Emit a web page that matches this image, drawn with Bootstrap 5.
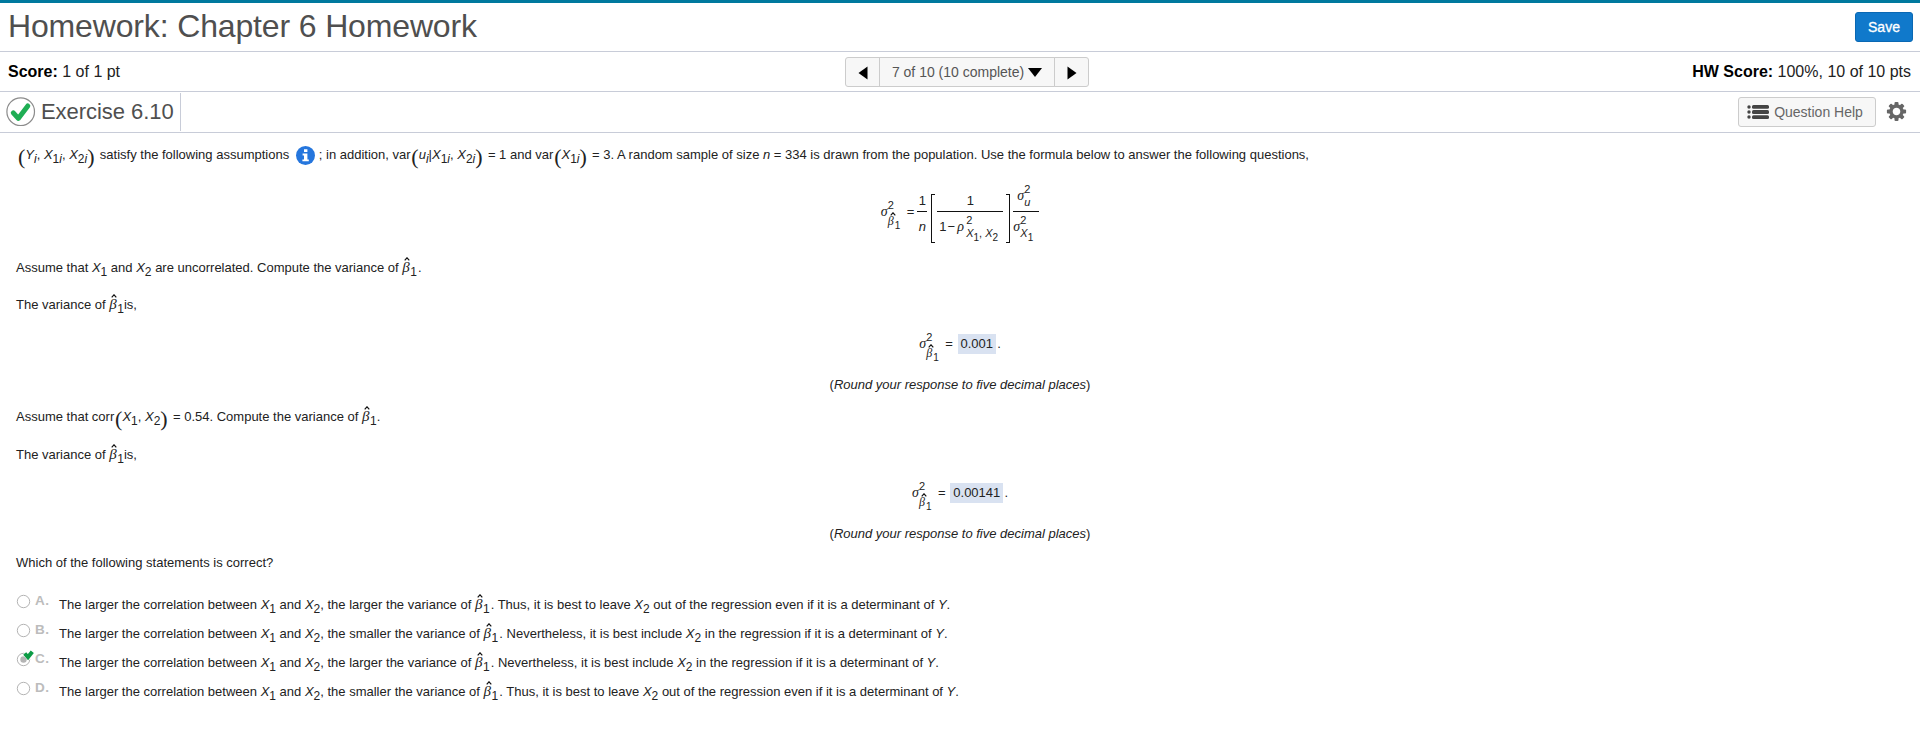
<!DOCTYPE html>
<html lang="en">
<head>
<meta charset="utf-8">
<title>Homework: Chapter 6 Homework</title>
<link href="https://cdn.jsdelivr.net/npm/bootstrap@5.3.0/dist/css/bootstrap.min.css" rel="stylesheet">
<style>
body{font-family:"Liberation Sans",Arial,sans-serif;color:#222;background:#fff;font-size:13px;line-height:20px;overflow:hidden}
.bar-title{height:52px;border-top:3px solid #00799e;border-bottom:1px solid #c8ccd8;padding:0 7px 0 8px}
.bar-title h1{font-size:32px;line-height:47px;color:#4f4f4f;font-weight:400;letter-spacing:-.15px}
.btn-save{width:58px;height:30px;padding:0;font-size:14px;line-height:28px;color:#fff;background:#1079cb;border:1px solid #0a68b3;border-radius:3px;-webkit-text-stroke:.3px #fff}
.bar-score{height:40px;border-bottom:1px solid #c8ccd8;padding:0 9px 0 8px;font-size:16px;color:#222}
.bar-score strong{color:#000}
.side{width:400px}
.pager .btn{height:30px;padding:0;font-size:14px;line-height:28px;color:#555;background:#f7f7f7;border:1px solid #ccc;border-radius:3px}
.pager .btn-arrow{width:35px}
.pager .btn-mid{width:176px}
.pager{margin-left:15px}
.bar-ex{height:41px;border-bottom:1px solid #c8ccd8;padding:0 11px 0 6px}
.ex-name{height:38px;width:175px;margin-top:1px;border-right:1px solid #c8ccd8;font-size:22px;color:#4f4f4f;gap:5px}
.ex-name span{line-height:30px;letter-spacing:-.05px}
.btn-help{width:138px;height:30px;padding:0 4px 0 0;font-size:14px;line-height:28px;color:#666;background:#f7f7f7;border:1px solid #ccc;border-radius:3px;gap:5px}
.work{padding:12px 0 0 16px}
.ln{height:20px;white-space:nowrap}
.mid-row{margin-left:-16px}
i.v{font-style:italic}
.lo{font-size:12px;line-height:0;vertical-align:-4px}
.pr{font-family:"Liberation Serif",serif;font-size:22px;line-height:0;vertical-align:-5px;margin-left:.8px}
.pr-r{margin:0 1.7px 0 0}
.pr-lead{margin-left:2px}
.info{vertical-align:-6px;margin:0 4px 0 3px}
.bh{position:relative;display:inline-block;width:8px;height:16px;font:italic 15px/16px "Liberation Serif",serif}
.bh svg{position:absolute;left:2px;top:-2px}
.grk{font-family:"Liberation Serif",serif;font-style:italic;font-size:14px;line-height:18px}
.stk{position:relative;display:inline-block;line-height:20px;text-align:left}
.stk .up,.stk .dn{position:absolute;left:7px;font-size:11px;white-space:nowrap}
.stk .up{top:-7px}
.stk .dn{top:6px}
.stk .dn .lo{font-size:10px}
.stk .dn.hat{top:9px}
.stk .hat .bh{font-size:12px;width:7px}
.stk .hat .bh svg{left:2px;top:-1px}
.rho .up,.rho .dn{left:9px}
.formula{height:93px}
.frac{display:grid;grid-template-rows:24px 24px;text-align:center}
.frac>:first-child{border-bottom:1px solid #111;padding-top:3px}
.frac>:last-child{padding-top:5px}
.brk{position:relative;top:7px;width:4px;height:49px;border:1px solid #111;border-width:1px 1.5px}
.brk-l{border-right:0;margin:0 2px 0 4px}
.brk-r{border-left:0;margin:0 3px 0 3px}
.ans{display:inline-block;background:#d9e2f1;padding:0 3px;height:20px}
.choice{height:29px}
.choice>svg{margin:-1px 4px 0 0;overflow:visible}
.choice b{width:24px;color:#bcbcbc;font-size:13.5px;letter-spacing:.4px;margin-top:-4px}
</style>
</head>
<body>
<header class="bar-title d-flex align-items-center justify-content-between">
  <h1 class="m-0 align-self-start">Homework: Chapter 6 Homework</h1>
  <button class="btn btn-save">Save</button>
</header>
<section class="bar-score d-flex align-items-center justify-content-between">
  <div class="side"><strong>Score:</strong> 1 of 1 pt</div>
  <div class="btn-group pager">
    <button class="btn btn-arrow" aria-label="Previous"><svg width="10" height="14" viewBox="0 0 10 14"><path d="M9.5 .5v13L.5 7z" fill="#000"/></svg></button>
    <button class="btn btn-mid">7 of 10 (10 complete) <svg width="14" height="9" viewBox="0 0 14 9"><path d="M0 0h14L7 9z" fill="#000"/></svg></button>
    <button class="btn btn-arrow" aria-label="Next"><svg width="10" height="14" viewBox="0 0 10 14"><path d="M.5 .5v13L9.5 7z" fill="#000"/></svg></button>
  </div>
  <div class="side text-end"><strong>HW Score:</strong> 100%, 10 of 10 pts</div>
</section>
<section class="bar-ex d-flex justify-content-between">
  <div class="ex-name d-flex align-items-center">
    <svg width="30" height="30" viewBox="0 0 30 30"><circle cx="14.7" cy="14.7" r="13.8" fill="#fff" stroke="#8c8c8c" stroke-width="1.2"/><path d="M7.3 15.8l5 5.6L21.8 9" fill="none" stroke="#1fae54" stroke-width="5" stroke-linecap="round" stroke-linejoin="round"/></svg>
    <span>Exercise 6.10</span>
  </div>
  <div class="d-flex align-items-center">
    <button class="btn btn-help d-flex align-items-center justify-content-center"><svg width="22" height="14" viewBox="0 0 22 14" fill="#444"><circle cx="2" cy="2" r="1.7"/><circle cx="2" cy="7" r="1.7"/><circle cx="2" cy="12" r="1.7"/><rect x="5" y="0" width="17" height="3.8" rx="1.5"/><rect x="5" y="5.1" width="17" height="3.8" rx="1.5"/><rect x="5" y="10.2" width="17" height="3.8" rx="1.5"/></svg><span>Question Help</span></button>
    <svg class="ms-2" width="25" height="22" viewBox="-12.5 -10.5 25 22"><g fill="#666"><g id="teeth"><rect x="-2" y="-9.6" width="4" height="19.2" rx="1"/><rect x="-9.6" y="-2" width="19.2" height="4" rx="1"/></g><use href="#teeth" transform="rotate(45)"/></g><circle r="5.5" fill="#fff" stroke="#666" stroke-width="3.4"/></svg>
  </div>
</section>
<main class="work">
  <div class="ln"><span class="pr pr-lead">(</span><i class="v">Y</i><i class="lo">i</i>, <i class="v">X</i><span class="lo">1<i>i</i></span>, <i class="v">X</i><span class="lo">2<i>i</i></span><span class="pr pr-r">)</span> <span>satisfy the following assumptions</span> <svg class="info" width="19" height="19" viewBox="0 0 19 19"><circle cx="9.5" cy="9.5" r="9.5" fill="#2576dd"/><path d="M8 3.2h3.4v2.9H8zM6.6 7.6h4.8v5.8h1.4v1.9H6.4v-1.9H8V9.5H6.6z" fill="#fff"/></svg>; in addition, var<span class="pr">(</span><i class="v">u</i><i class="lo">i</i>|<i class="v">X</i><span class="lo">1<i>i</i></span>, <i class="v">X</i><span class="lo">2<i>i</i></span><span class="pr pr-r">)</span> = 1 and var<span class="pr">(</span><i class="v">X</i><span class="lo">1<i>i</i></span><span class="pr pr-r">)</span> = 3. A random sample of size <i class="v">n</i> = 334 is drawn from the population. Use the formula below to answer the following questions,</div>

  <div class="formula mid-row d-flex align-items-center justify-content-center">
    <span class="stk" style="width:26px"><span class="grk">σ</span><span class="up">2</span><span class="dn hat"><span class="bh">β<svg width="6" height="4" viewBox="0 0 6 4"><path d="M.7 3.3L3 .8l2.3 2.5" fill="none" stroke="#111" stroke-width="1.2"/></svg></span><span class="lo">1</span></span></span>
    <span>=</span>
    <span class="frac" style="width:10px;margin-left:3px"><span>1</span><i class="v">n</i></span>
    <span class="brk brk-l"></span>
    <span class="frac" style="width:66px"><span>1</span><span class="text-start" style="padding-left:2px">1<span style="margin:0 2px 0 1px">−</span><span class="stk rho"><span class="grk">ρ</span><span class="up">2</span><span class="dn"><i class="v">X</i><span class="lo">1</span>, <i class="v">X</i><span class="lo">2</span></span></span></span></span>
    <span class="brk brk-r"></span>
    <span class="frac" style="width:26px"><span class="text-start ps-1"><span class="stk" style="top:-5px"><span class="grk">σ</span><span class="up">2</span><i class="dn">u</i></span></span><span class="text-start"><span class="stk"><span class="grk">σ</span><span class="up">2</span><span class="dn"><i class="v">X</i><span class="lo">1</span></span></span></span></span>
  </div>

  <div class="ln">Assume that <i class="v">X</i><span class="lo">1</span> and <i class="v">X</i><span class="lo">2</span> are uncorrelated. Compute the variance of <span class="bh">β<svg width="6" height="4" viewBox="0 0 6 4"><path d="M.7 3.3L3 .8l2.3 2.5" fill="none" stroke="#111" stroke-width="1.2"/></svg></span><span class="lo">1</span>&hairsp;.</div>
  <div class="ln" style="margin-top:17px">The variance of <span class="bh">β<svg width="6" height="4" viewBox="0 0 6 4"><path d="M.7 3.3L3 .8l2.3 2.5" fill="none" stroke="#111" stroke-width="1.2"/></svg></span><span class="lo">1</span>is,</div>
  <div class="ln mid-row text-center" style="margin-top:19px"><span class="stk" style="width:26px"><span class="grk">σ</span><span class="up">2</span><span class="dn hat"><span class="bh">β<svg width="6" height="4" viewBox="0 0 6 4"><path d="M.7 3.3L3 .8l2.3 2.5" fill="none" stroke="#111" stroke-width="1.2"/></svg></span><span class="lo">1</span></span></span>= &hairsp;<span class="ans">0.001</span>&hairsp;.</div>
  <div class="ln mid-row text-center" style="margin-top:21px">(<i class="v">Round your response to five decimal places</i>)</div>
  <div class="ln" style="margin-top:12px">Assume that corr<span class="pr">(</span><i class="v">X</i><span class="lo">1</span>, <i class="v">X</i><span class="lo">2</span><span class="pr pr-r">)</span> = 0.54. Compute the variance of <span class="bh">β<svg width="6" height="4" viewBox="0 0 6 4"><path d="M.7 3.3L3 .8l2.3 2.5" fill="none" stroke="#111" stroke-width="1.2"/></svg></span><span class="lo">1</span>.</div>
  <div class="ln" style="margin-top:18px">The variance of <span class="bh">β<svg width="6" height="4" viewBox="0 0 6 4"><path d="M.7 3.3L3 .8l2.3 2.5" fill="none" stroke="#111" stroke-width="1.2"/></svg></span><span class="lo">1</span>is,</div>
  <div class="ln mid-row text-center" style="margin-top:18px"><span class="stk" style="width:26px"><span class="grk">σ</span><span class="up">2</span><span class="dn hat"><span class="bh">β<svg width="6" height="4" viewBox="0 0 6 4"><path d="M.7 3.3L3 .8l2.3 2.5" fill="none" stroke="#111" stroke-width="1.2"/></svg></span><span class="lo">1</span></span></span>= &hairsp;<span class="ans">0.00141</span>&hairsp;.</div>
  <div class="ln mid-row text-center" style="margin-top:21px">(<i class="v">Round your response to five decimal places</i>)</div>
  <div class="ln" style="margin:9px 0 22px">Which of the following statements is correct?</div>

  <div class="choice d-flex"><svg width="15" height="15" viewBox="0 0 15 15"><circle cx="7.5" cy="7.5" r="6.2" fill="#fff" stroke="#b4b4b4"/></svg><b>A.</b><div class="ln">The larger the correlation between <i class="v">X</i><span class="lo">1</span> and <i class="v">X</i><span class="lo">2</span>, the larger the variance of <span class="bh">β<svg width="6" height="4" viewBox="0 0 6 4"><path d="M.7 3.3L3 .8l2.3 2.5" fill="none" stroke="#111" stroke-width="1.2"/></svg></span><span class="lo">1</span>&hairsp;. Thus, it is best to leave <i class="v">X</i><span class="lo">2</span> out of the regression even if it is a determinant of <i class="v">Y</i>.</div></div>
  <div class="choice d-flex"><svg width="15" height="15" viewBox="0 0 15 15"><circle cx="7.5" cy="7.5" r="6.2" fill="#fff" stroke="#b4b4b4"/></svg><b>B.</b><div class="ln">The larger the correlation between <i class="v">X</i><span class="lo">1</span> and <i class="v">X</i><span class="lo">2</span>, the smaller the variance of <span class="bh">β<svg width="6" height="4" viewBox="0 0 6 4"><path d="M.7 3.3L3 .8l2.3 2.5" fill="none" stroke="#111" stroke-width="1.2"/></svg></span><span class="lo">1</span>&hairsp;. Nevertheless, it is best include <i class="v">X</i><span class="lo">2</span> in the regression if it is a determinant of <i class="v">Y</i>.</div></div>
  <div class="choice d-flex"><svg width="15" height="15" viewBox="0 0 15 15"><circle cx="7.5" cy="7.5" r="6.2" fill="#fff" stroke="#b4b4b4"/><circle cx="7.5" cy="7.5" r="3.2" fill="#b4b4b4"/><path d="M8.5 1.5l4 3.5 4.5-5.5" fill="none" stroke="#fff" stroke-width="5"/><path d="M8.7 1.5l3.3 3.6L16.3-.2" fill="none" stroke="#0c9b45" stroke-width="4"/></svg><b>C.</b><div class="ln">The larger the correlation between <i class="v">X</i><span class="lo">1</span> and <i class="v">X</i><span class="lo">2</span>, the larger the variance of <span class="bh">β<svg width="6" height="4" viewBox="0 0 6 4"><path d="M.7 3.3L3 .8l2.3 2.5" fill="none" stroke="#111" stroke-width="1.2"/></svg></span><span class="lo">1</span>&hairsp;. Nevertheless, it is best include <i class="v">X</i><span class="lo">2</span> in the regression if it is a determinant of <i class="v">Y</i>.</div></div>
  <div class="choice d-flex"><svg width="15" height="15" viewBox="0 0 15 15"><circle cx="7.5" cy="7.5" r="6.2" fill="#fff" stroke="#b4b4b4"/></svg><b>D.</b><div class="ln">The larger the correlation between <i class="v">X</i><span class="lo">1</span> and <i class="v">X</i><span class="lo">2</span>, the smaller the variance of <span class="bh">β<svg width="6" height="4" viewBox="0 0 6 4"><path d="M.7 3.3L3 .8l2.3 2.5" fill="none" stroke="#111" stroke-width="1.2"/></svg></span><span class="lo">1</span>&hairsp;. Thus, it is best to leave <i class="v">X</i><span class="lo">2</span> out of the regression even if it is a determinant of <i class="v">Y</i>.</div></div>
</main>
<script src="https://cdn.jsdelivr.net/npm/bootstrap@5.3.0/dist/js/bootstrap.bundle.min.js"></script>
</body>
</html>
